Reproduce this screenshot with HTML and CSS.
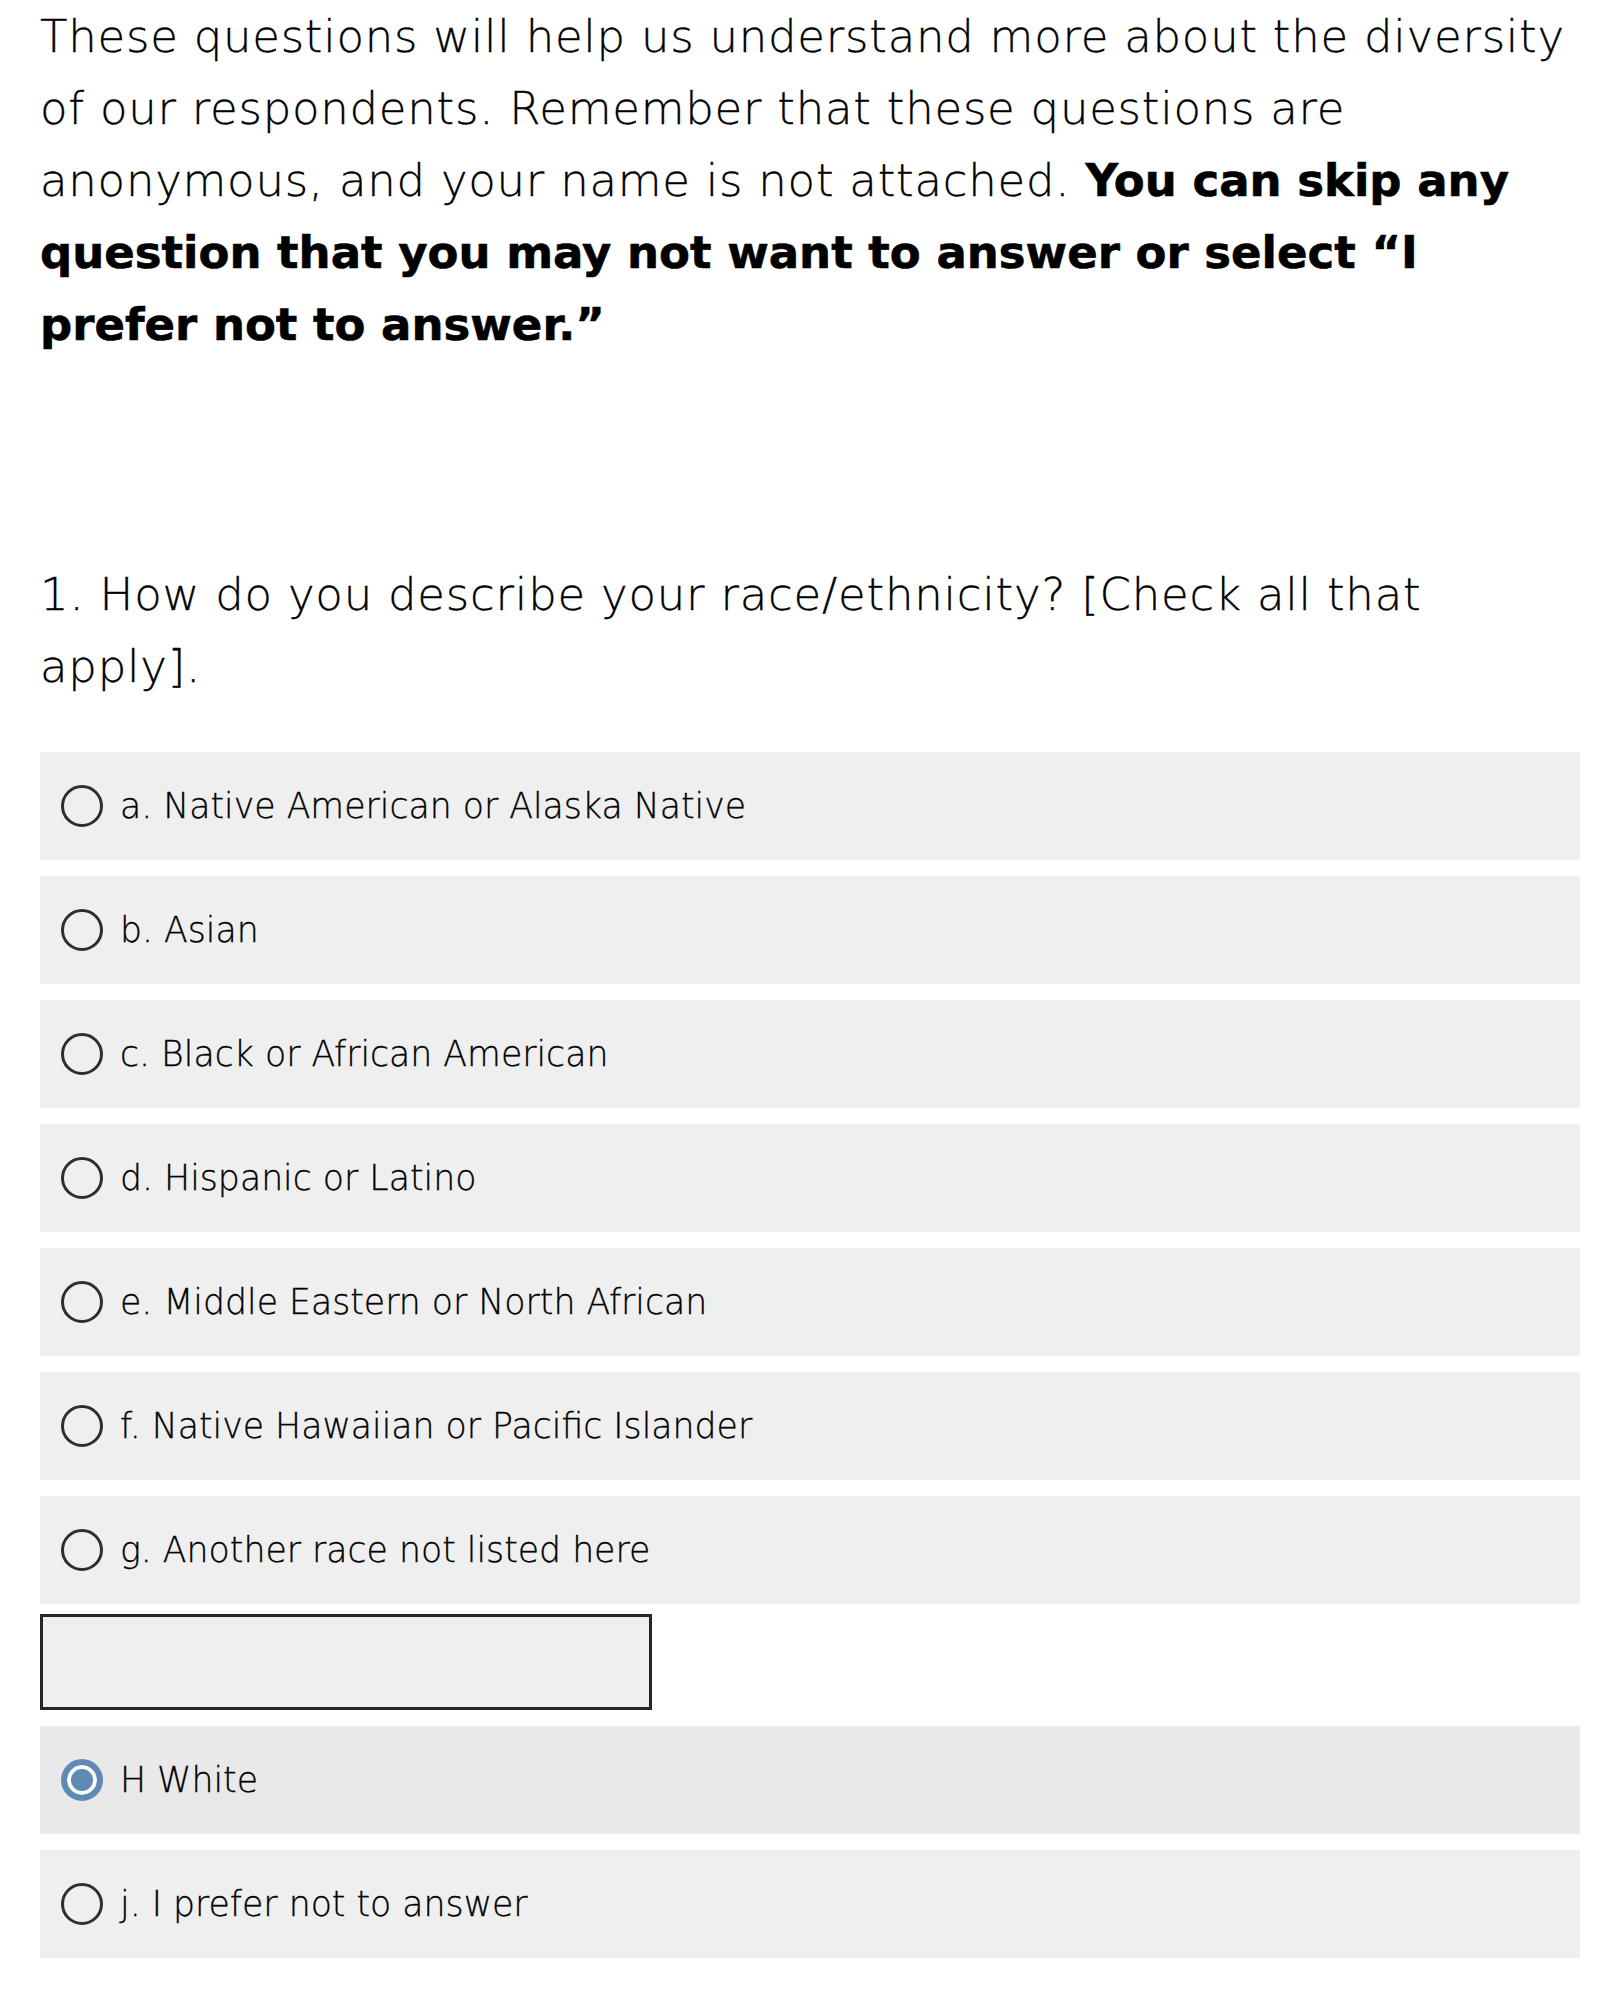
FILE: index.html
```html
<!DOCTYPE html>
<html lang="en">
<head>
<meta charset="utf-8">
<title>Survey</title>
<link rel="stylesheet" href="styles.css">
</head>
<body>
<main class="page">
  <p class="intro">These questions will help us understand more about the diversity of our respondents. Remember that these questions are anonymous, and your name is not attached. <strong>You can skip any question that you may not want to answer or select “I prefer not to answer.”</strong></p>

  <h2 class="question">1. How do you describe your race/ethnicity? [Check all that apply].</h2>

  <div class="options">
    <label class="option"><span class="radio"></span><span class="label">a. Native American or Alaska Native</span></label>
    <label class="option"><span class="radio"></span><span class="label">b. Asian</span></label>
    <label class="option"><span class="radio"></span><span class="label">c. Black or African American</span></label>
    <label class="option"><span class="radio"></span><span class="label">d. Hispanic or Latino</span></label>
    <label class="option"><span class="radio"></span><span class="label">e. Middle Eastern or North African</span></label>
    <label class="option"><span class="radio"></span><span class="label">f. Native Hawaiian or Pacific Islander</span></label>
    <label class="option"><span class="radio"></span><span class="label">g. Another race not listed here</span></label>
    <div class="other-input"></div>
    <label class="option option-selected"><span class="radio radio-checked"></span><span class="label">H White</span></label>
    <label class="option"><span class="radio"></span><span class="label">j. I prefer not to answer</span></label>
  </div>
</main>
</body>
</html>
```

FILE: styles.css
```css
html, body {
  margin: 0;
  padding: 0;
  background: #ffffff;
}

.page {
  padding: 1px 40px 36px 40px;
  font-family: "DejaVu Sans", "Noto Sans", sans-serif;
  color: #000;
}

.intro {
  margin: 0;
  font-size: 45px;
  font-weight: 200;
  line-height: 72px;
  letter-spacing: 0.75px;
  -webkit-text-stroke: 0.3px #000;
}

.intro strong {
  font-weight: 700;
  letter-spacing: 0;
  -webkit-text-stroke: 0.6px #000;
}

.question {
  margin: 198px 0 0 0;
  max-width: 1440px;
  font-size: 45px;
  font-weight: 200;
  line-height: 72px;
  letter-spacing: 0.78px;
  -webkit-text-stroke: 0.3px #000;
}

.options {
  margin-top: 49px;
  display: flex;
  flex-direction: column;
}

.option {
  display: flex;
  align-items: center;
  height: 108px;
  background: #efefef;
  padding-left: 21px;
  margin-bottom: 16px;
  box-sizing: border-box;
}

.option-selected {
  background: #e9e9e9;
}

.radio {
  width: 42px;
  height: 42px;
  box-sizing: border-box;
  border: 3px solid #2e2e2e;
  border-radius: 50%;
  flex: none;
  margin-right: 17px;
}

.radio-checked {
  border: 6px solid #5f8ab6;
  background: #5f8ab6;
  box-shadow: inset 0 0 0 4px #ffffff;
}

.label {
  font-size: 34.7px;
  font-weight: 200;
  color: #000;
  -webkit-text-stroke: 0.3px #000;
}

.other-input {
  width: 612px;
  height: 96px;
  box-sizing: border-box;
  border: 3px solid #262626;
  background: #efefef;
  margin-top: -6px;
  margin-bottom: 16px;
}
```
